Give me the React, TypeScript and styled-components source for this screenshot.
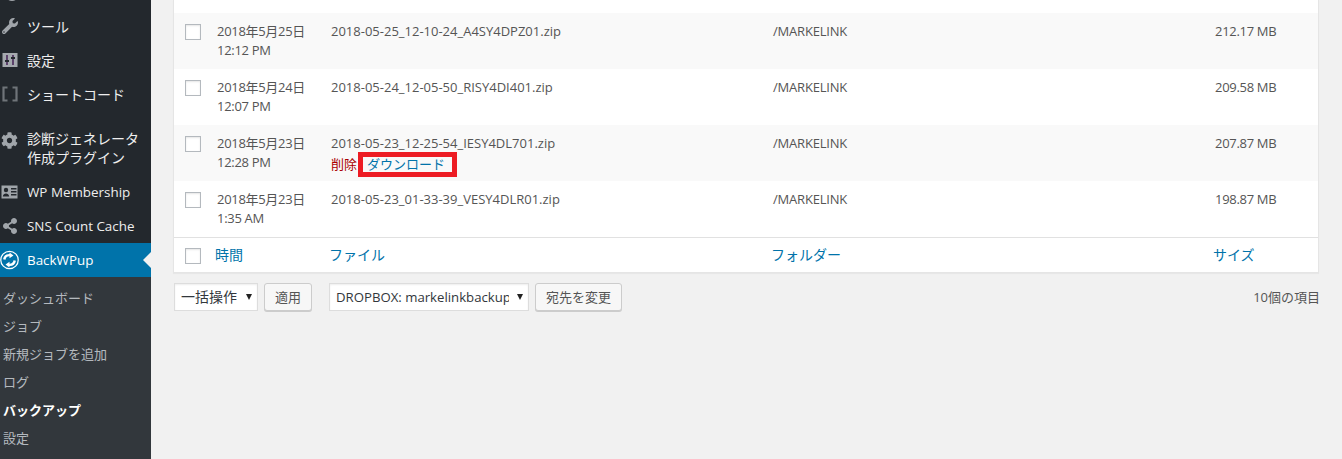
import React from "react";
import styled, { createGlobalStyle } from "styled-components";
import { FaWrench, FaCog, FaShareAlt } from "react-icons/fa";

const FONT = `"Open Sans", "Noto Sans CJK JP", sans-serif`;

const Global = createGlobalStyle`
  html, body { margin: 0; padding: 0; height: 459px; overflow: hidden; background: #f1f1f1; }
  body { font-family: ${FONT}; font-size: 13px; color: #444; }
`;

const Page = styled.div`
  display: flex;
  height: 459px;
  overflow: hidden;
`;

const Sidebar = styled.nav`
  width: 151px;
  flex: none;
  background: #23282d;
  display: flex;
  flex-direction: column;
  height: 459px;
  overflow: hidden;
`;

const MenuList = styled.div`
  margin-top: -25px;
  display: flex;
  flex-direction: column;
`;

const MenuItem = styled.div<{ $gapBefore?: number; $tall?: boolean; $latin?: boolean }>`
  display: flex;
  align-items: ${(p) => (p.$tall ? "flex-start" : "center")};
  height: ${(p) => (p.$tall ? 53 : 34)}px;
  box-sizing: border-box;
  padding-top: ${(p) => (p.$tall ? 8 : 0)}px;
  margin-top: ${(p) => p.$gapBefore ?? 0}px;
  color: #eee;
  font-size: ${(p) => (p.$latin ? 13.4 : 14)}px;
  line-height: ${(p) => (p.$tall ? 18.5 : 19)}px;
  white-space: nowrap;
`;

const MenuIcon = styled.span<{ $top?: number }>`
  width: 27px;
  flex: none;
  display: flex;
  justify-content: center;
  color: #a0a5aa;
  padding-right: 8px;
  padding-top: ${(p) => p.$top ?? 0}px;
  box-sizing: border-box;
  svg { display: block; }
`;

const ActiveItem = styled(MenuItem)`
  background: #0073aa;
  color: #fff;
  position: relative;
  &::after {
    content: "";
    position: absolute;
    right: 0;
    top: 9px;
    border: 8px solid transparent;
    border-right-color: #f1f1f1;
    border-left-width: 0;
  }
`;

const SubMenu = styled.div`
  background: #32373c;
  flex: 1;
  padding-top: 7px;
  display: flex;
  flex-direction: column;
`;

const SubItem = styled.div<{ $current?: boolean }>`
  height: 28px;
  line-height: 28px;
  padding-left: 3px;
  font-size: 13px;
  color: ${(p) => (p.$current ? "#fff" : "rgba(240,245,250,.7)")};
  font-weight: ${(p) => (p.$current ? 700 : 400)};
  white-space: nowrap;
`;

const Content = styled.main`
  flex: 1;
  padding-left: 22px;
  padding-right: 22px;
  min-width: 0;
`;

const TableCard = styled.div`
  background: #fff;
  border: 1px solid #e5e5e5;
  border-top: 0;
  box-shadow: 0 1px 1px rgba(0, 0, 0, 0.04);
  height: 273px;
  padding-top: 13px;
  box-sizing: border-box;
  width: 1146px;
`;

const Row = styled.div<{ $striped?: boolean }>`
  display: grid;
  grid-template-columns: 43px 114px 442px 442px 1fr;
  height: 56px;
  background: ${(p) => (p.$striped ? "#f9f9f9" : "#fff")};
  color: #555;
  font-size: 13px;
  line-height: 19px;
`;

const Cell = styled.div<{ $tight?: number }>`
  padding-top: 9px;
  white-space: nowrap;
  letter-spacing: ${(p) => p.$tight ?? 0}px;
`;

const CheckCell = styled.div`
  padding: 11px 0 0 11px;
`;

const Check = styled.span`
  display: block;
  width: 16px;
  height: 16px;
  box-sizing: border-box;
  border: 1px solid #b4b9be;
  background: #fff;
  box-shadow: inset 0 1px 2px rgba(0, 0, 0, 0.1);
`;

const Actions = styled.div`
  padding-top: 2px;
  display: flex;
`;

const DeleteLink = styled.span`
  color: #a00;
`;

const DownloadLink = styled.span`
  color: #0073aa;
  margin-left: 10px;
  position: relative;
`;

const Highlight = styled.span`
  position: absolute;
  left: -9px;
  right: -12px;
  top: -3px;
  bottom: -3px;
  border: 5px solid #ed1c24;
`;

const FootRow = styled.div`
  display: grid;
  grid-template-columns: 43px 114px 442px 442px 1fr;
  height: 35px;
  border-top: 1px solid #e1e1e1;
  font-size: 14px;
  line-height: 19px;
  color: #0073aa;
`;

const FootCell = styled.div`
  padding-top: 7px;
  margin-left: -2px;
  white-space: nowrap;
`;

const FootCheck = styled.div`
  padding: 10px 0 0 11px;
`;

const Bar = styled.div`
  display: flex;
  align-items: flex-start;
  margin: 10px 0 0 1px;
  height: 28px;
`;

const Select = styled.div<{ $w: number; $ml?: number }>`
  width: ${(p) => p.$w}px;
  margin-left: ${(p) => p.$ml ?? 0}px;
  height: 28px;
  box-sizing: border-box;
  flex: none;
  border: 1px solid #ddd;
  background: #fff;
  color: #32373c;
  line-height: 26px;
  display: flex;
  align-items: center;
  padding-left: 6px;
  padding-right: 5px;
  box-shadow: inset 0 1px 2px rgba(0, 0, 0, 0.07);
`;

const SelectLabel = styled.span<{ $latin?: boolean }>`
  flex: 1;
  overflow: hidden;
  white-space: nowrap;
  min-width: 0;
  font-size: ${(p) => (p.$latin ? 13.2 : 14)}px;
`;

const Arrow = styled.span`
  flex: none;
  margin-left: 8px;
  width: 0;
  height: 0;
  border-left: 3.5px solid transparent;
  border-right: 3.5px solid transparent;
  border-top: 6px solid #222;
`;

const Button = styled.div<{ $w: number }>`
  width: ${(p) => p.$w}px;
  flex: none;
  height: 28px;
  margin-left: 6px;
  box-sizing: border-box;
  border: 1px solid #ccc;
  border-radius: 3px;
  background: #f7f7f7;
  box-shadow: 0 1px 0 #ccc;
  color: #555;
  font-size: 13px;
  line-height: 26px;
  text-align: center;
`;

const Count = styled.div`
  margin-left: auto;
  font-size: 13px;
  line-height: 28px;
  color: #555;
`;

const UsersSliver = () => (
  <svg width="16" height="18" viewBox="0 0 16 18">
    <ellipse cx="10" cy="15" rx="5" ry="3" fill="#a0a5aa" />
  </svg>
);

const Sliders = () => (
  <svg width="16" height="14" viewBox="0 0 16 14">
    <rect x="0.500" y="0" width="15" height="14" fill="#a5a9ae" />
    <path d="M5 2v10M11 2v10" stroke="#4a2a5a" strokeWidth="1.600" />
    <path d="M3 8h4M9 5h4" stroke="#23282d" strokeWidth="2" />
  </svg>
);

const Brackets = () => (
  <svg width="16" height="16" viewBox="0 0 16 16" fill="none" stroke="#6f7479" strokeWidth="2.200">
    <path d="M5.500 1.500H1.500v13h4M10.500 1.500h4v13h-4" />
  </svg>
);

const Card = () => (
  <svg width="17" height="14" viewBox="0 0 17 14">
    <rect x="0.500" y="0.500" width="16" height="13" fill="#a0a5aa" />
    <circle cx="5" cy="5" r="2.200" fill="#23282d" />
    <path d="M1.800 11.500c.3-4 6.100-4 6.400 0zM10 3h5.500v1.400H10zM10 6h5.500v1.400H10zM10 9h5.500v1.400H10z" fill="#23282d" />
  </svg>
);

const BackWPupLogo = () => (
  <svg width="20" height="20" viewBox="0 0 20 20" fill="none">
    <circle cx="10" cy="10" r="9.200" stroke="#fff" strokeWidth="1.300" />
    <path d="M4.500 9.500C5 6.500 7.500 4.700 10.500 4.900" stroke="#fff" strokeWidth="2.600" />
    <path d="M15.500 10.500C15 13.500 12.500 15.300 9.500 15.100" stroke="#fff" strokeWidth="2.600" />
    <path d="M10 2.200l4.200 3-4.200 3zM10 11.800l-4.200 3 4.200 3z" fill="#fff" />
  </svg>
);

type Item = { date: string; time: string; file: string; size: string; actions?: boolean };

const ROWS: Item[] = [
  { date: "2018年5月25日", time: "12:12 PM", file: "2018-05-25_12-10-24_A4SY4DPZ01.zip", size: "212.17 MB" },
  { date: "2018年5月24日", time: "12:07 PM", file: "2018-05-24_12-05-50_RISY4DI401.zip", size: "209.58 MB" },
  { date: "2018年5月23日", time: "12:28 PM", file: "2018-05-23_12-25-54_IESY4DL701.zip", size: "207.87 MB", actions: true },
  { date: "2018年5月23日", time: "1:35 AM", file: "2018-05-23_01-33-39_VESY4DLR01.zip", size: "198.87 MB" },
];

export default function App() {
  return (
    <Page>
      <Global />
      <Sidebar>
        <MenuList>
          <MenuItem>
            <MenuIcon><UsersSliver /></MenuIcon>
          </MenuItem>
          <MenuItem>
            <MenuIcon><FaWrench size={16} /></MenuIcon>
            ツール
          </MenuItem>
          <MenuItem>
            <MenuIcon><Sliders /></MenuIcon>
            設定
          </MenuItem>
          <MenuItem>
            <MenuIcon><Brackets /></MenuIcon>
            ショートコード
          </MenuItem>
          <MenuItem $gapBefore={11} $tall>
            <MenuIcon $top={2}><FaCog size={17} /></MenuIcon>
            <span>診断ジェネレータ<br />作成プラグイン</span>
          </MenuItem>
          <MenuItem $latin>
            <MenuIcon><Card /></MenuIcon>
            WP Membership
          </MenuItem>
          <MenuItem $latin>
            <MenuIcon><FaShareAlt size={16} /></MenuIcon>
            SNS Count Cache
          </MenuItem>
          <ActiveItem $latin>
            <MenuIcon><BackWPupLogo /></MenuIcon>
            BackWPup
          </ActiveItem>
        </MenuList>
        <SubMenu>
          <SubItem>ダッシュボード</SubItem>
          <SubItem>ジョブ</SubItem>
          <SubItem>新規ジョブを追加</SubItem>
          <SubItem>ログ</SubItem>
          <SubItem $current>バックアップ</SubItem>
          <SubItem>設定</SubItem>
        </SubMenu>
      </Sidebar>
      <Content>
        <TableCard>
          {ROWS.map((r, i) => (
            <Row key={r.file} $striped={i % 2 === 0}>
              <CheckCell><Check /></CheckCell>
              <Cell $tight={-0.3}>{r.date}<br />{r.time}</Cell>
              <Cell>
                {r.file}
                {r.actions && (
                  <Actions>
                    <DeleteLink>削除</DeleteLink>
                    <DownloadLink>ダウンロード<Highlight /></DownloadLink>
                  </Actions>
                )}
              </Cell>
              <Cell $tight={-0.2}>/MARKELINK</Cell>
              <Cell $tight={-0.3}>{r.size}</Cell>
            </Row>
          ))}
          <FootRow>
            <FootCheck><Check /></FootCheck>
            <FootCell>時間</FootCell>
            <FootCell>ファイル</FootCell>
            <FootCell>フォルダー</FootCell>
            <FootCell>サイズ</FootCell>
          </FootRow>
        </TableCard>
        <Bar>
          <Select $w={84}><SelectLabel>一括操作</SelectLabel><Arrow /></Select>
          <Button $w={48}>適用</Button>
          <Select $w={200} $ml={17}><SelectLabel $latin>DROPBOX: markelinkbackup</SelectLabel><Arrow /></Select>
          <Button $w={87}>宛先を変更</Button>
          <Count>10個の項目</Count>
        </Bar>
      </Content>
    </Page>
  );
}
